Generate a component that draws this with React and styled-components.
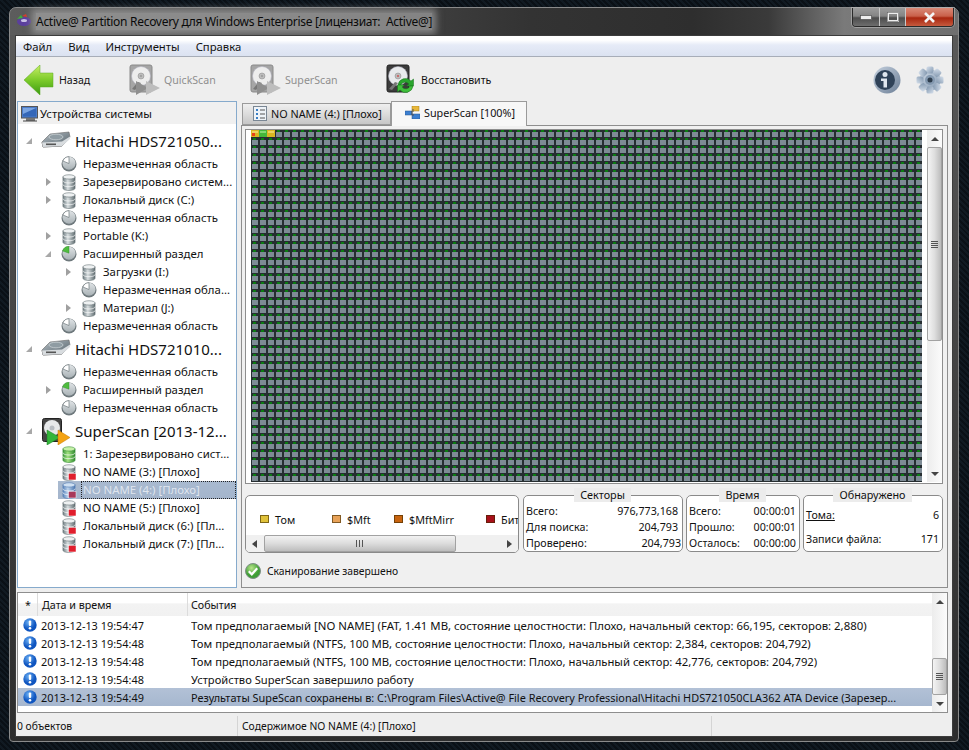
import React from "react";
import styled, { createGlobalStyle } from "styled-components";

const Global = createGlobalStyle`
  html, body { margin: 0; padding: 0; background: #0b1117; }
  body { width: 969px; height: 750px; overflow: hidden; font-family: "Noto Sans", "Open Sans", "Liberation Sans", sans-serif; font-size: 12px; color: #111; }
  * { box-sizing: border-box; }
`;

const Desktop = styled.div`
  width: 969px; height: 750px; padding: 7px 10px 8px 9px;
  background: repeating-linear-gradient(45deg, #0a1016 0 2px, #111a22 2px 4px);
`;
const Win = styled.div`
  height: 735px; display: flex; flex-direction: column;
  border: 1px solid #8a8a8a; border-radius: 7px 7px 4px 4px;
  background: linear-gradient(180deg, #5b5b5b 0, #474747 40%, #2d2d2d 100%);
  padding: 0 5px 4px 5px;
`;
const TitleBar = styled.div`
  height: 27px; flex: none; display: flex; align-items: flex-start; margin: 0 -5px; padding-left: 6px;
  border-radius: 7px 7px 0 0;
  background: linear-gradient(90deg, #5c5c5c 0, #4c4c4c 30%, #333 55%, #2e2e2e 72%, #3a3a3a 80%, #7a7a7a 88%, #6f6f6f 100%);
`;
const TitleIcon = styled.svg`width: 15px; height: 13px; margin-top: 6px; flex: none;`;
const TitleText = styled.span`
  margin: 5px 0 0 5px; font-size: 12px; letter-spacing: -.29px; line-height: 17px; color: #0a0a0a; white-space: pre;
  background: rgba(175,175,175,.62); box-shadow: 0 0 7px 4px rgba(175,175,175,.62);
`;
const WinButtons = styled.div`
  margin-left: auto; margin-right: 4px; display: flex; height: 19px; flex: none; border: 1px solid #2a2a2a;
  border-top: none; border-radius: 0 0 4px 4px; overflow: hidden; box-shadow: 0 0 0 1px rgba(255,255,255,.3);
`;
const WinBtn = styled.div`
  width: ${p => p.$w}px; display: flex; align-items: center; justify-content: center;
  border-right: ${p => p.$last ? "none" : "1px solid #c8c8c8"};
  background: ${p => p.$close
    ? "linear-gradient(180deg, #d98a78 0, #c9604a 45%, #a8260f 55%, #c65a3e 100%)"
    : "linear-gradient(180deg, #9b9b9b 0, #848484 45%, #4d4d4d 55%, #6e6e6e 100%)"};
`;
const Client = styled.div`
  flex: 1; min-height: 0; display: flex; flex-direction: column; background: #eeeeee; border: 1px solid #3c3c3c;
`;
const MenuBar = styled.div`
  height: 21px; flex: none; display: flex; align-items: center; padding: 1px 0 0 0;
  background: linear-gradient(180deg, #fff 0, #fff 20%, #e6ebf7 45%, #dbe2f1 100%); border-bottom: 1px solid #a7adb8;
`;
const MenuItem = styled.span`padding: 0 ${p => p.$pr}px 0 ${p => p.$pl}px; font-size: 11.3px; line-height: 20px; white-space: nowrap;`;
const Toolbar = styled.div`
  height: 44px; flex: none; display: flex; align-items: center; padding: 1px 8px 0 8px;
`;
const ToolBtn = styled.div`
  width: ${p => p.$w}px; display: flex; align-items: center; gap: ${p => p.$gap}px; flex: none;
  font-size: 10.6px; color: ${p => p.$off ? "#8f8f8f" : "#111"}; white-space: nowrap;
`;
const ToolRight = styled.div`margin-left: auto; display: flex; align-items: center; gap: 15px;`;
const Panes = styled.div`
  flex: none; height: 487px; display: flex; gap: 4px; padding: 0 4px 0 1px;
`;
const Side = styled.div`
  width: 220px; flex: none; display: flex; flex-direction: column; background: #fff; border: 1px solid #86aacc; overflow: hidden;
`;
const SideHead = styled.div`
  height: 22px; flex: none; display: flex; align-items: center; gap: 2px; padding: 1px 0 0 3px; background: #f0f0f0; font-size: 11.4px;
`;
const Tree = styled.div`padding-top: 3px; display: flex; flex-direction: column;`;
const DeviceRow = styled.div`
  height: 28px; display: flex; align-items: center; font-size: 15px; white-space: nowrap;
`;
const DeviceLabel = styled.span`margin-left: 3px;`;
const Exp = styled.span`
  width: ${p => p.$w}px; flex: none; display: flex; justify-content: center; align-items: center;
`;
const NodeRow = styled.div`
  height: 18px; display: flex; align-items: center; white-space: nowrap; font-size: 11.4px;
  padding-left: ${p => 22 + p.$lvl * 20}px;
`;
const NodeBody = styled.div`
  flex: 1; min-width: 0; height: 18px; margin-left: 2px; padding-left: 3px; display: flex; align-items: center;
  background: ${p => p.$sel ? "linear-gradient(180deg, #a9bad0, #a4b5cc)" : "transparent"};
  color: ${p => p.$sel ? "#dfe5ee" : "#111"};
`;
const NodeIcon = styled.span`width: 16px; height: 18px; flex: none; display: flex; align-items: center; justify-content: center;`;
const NodeText = styled.span`
  margin-left: 4px; flex: 1; min-width: 0; line-height: 16px; height: 18px; padding: 0 1px; display: block;
  border: ${p => p.$sel ? "1px dotted #222" : "1px solid transparent"};
`;
const Main = styled.div`flex: 1; min-width: 0; display: flex; flex-direction: column;`;
const Tabs = styled.div`height: 24px; flex: none; display: flex; align-items: flex-end; padding-left: 1px; position: relative; z-index: 1;`;
const Tab = styled.div`
  width: ${p => p.$w}px; height: ${p => p.$on ? 25 : 22}px; flex: none; display: flex; align-items: center; gap: 4px;
  padding: 0 0 ${p => p.$on ? 3 : 2}px ${p => p.$on ? 13 : 10}px; font-size: 10.8px; white-space: nowrap;
  border: 1px solid #9a9a9a; border-bottom: ${p => p.$on ? "none" : "1px solid #9a9a9a"};
  background: ${p => p.$on ? "#f7f7f7" : "linear-gradient(180deg, #efefef 0, #dcdcdc 50%, #c6c6c6 100%)"};
  margin-bottom: ${p => p.$on ? -1 : 0}px;
`;
const TabBody = styled.div`
  flex: 1; min-height: 0; border: 1px solid #8e8e8e; background: #f0f0f0; padding: 3px 4px 0 3px; display: flex; flex-direction: column;
`;
const MapFrame = styled.div`
  height: 355px; flex: none; display: flex; background: #fff; border: 1px solid #8e8e8e; padding: 0 0 1px 5px; gap: 5px;
`;
const MapSvg = styled.svg`width: 671px; height: 352px; flex: none; display: block;`;
const VBar = styled.div`
  width: ${p => p.$w}px; flex: none; display: flex; flex-direction: column; background: linear-gradient(90deg, #ececec, #fbfbfb);
`;
const VEnd = styled.div`height: 17px; flex: none; display: flex; align-items: center; justify-content: center;`;
const VThumb = styled.div`
  height: ${p => p.$h}px; flex: none; border: 1px solid #a2a2a2; border-radius: 2px;
  background: linear-gradient(90deg, #f4f4f4 0, #dedede 50%, #bcbcbc 100%); display: flex; align-items: center; justify-content: center;
`;
const VFill = styled.div`flex: 1;`;
const Grip = styled.div`width: 7px; height: 7px; background: repeating-linear-gradient(180deg, #555 0 1px, transparent 1px 2px);`;
const GripH = styled.div`width: 8px; height: 7px; background: repeating-linear-gradient(90deg, #555 0 1px, transparent 1px 3px);`;
const Stats = styled.div`height: 64px; margin-top: 4px; flex: none; display: flex; gap: 3px;`;
const LegendBox = styled.div`
  width: 274px; height: 58px; margin-top: 7px; flex: none; background: #fff; border: 1px solid #8a8a8a; border-radius: 5px;
  display: flex; flex-direction: column; overflow: hidden; margin-right: 1px;
`;
const LegendItems = styled.div`flex: 1; display: flex; align-items: center; padding: 7px 0 0 14px; white-space: nowrap; overflow: hidden;`;
const LegendItem = styled.div`width: ${p => p.$w}px; flex: none; display: flex; align-items: center; gap: 6px; font-size: 10.8px;`;
const Swatch = styled.span`
  width: 9px; height: 8px; flex: none; border: 1px solid rgba(60,40,0,.6); background: ${p => p.$c};
`;
const HBar = styled.div`height: 17px; flex: none; display: flex; align-items: stretch; background: #f0f0f0;`;
const HEnd = styled.div`width: 18px; flex: none; display: flex; align-items: center; justify-content: center;`;
const HThumb = styled.div`
  width: 192px; flex: none; border: 1px solid #a2a2a2; border-radius: 2px;
  background: linear-gradient(180deg, #f2f2f2 0, #dcdcdc 50%, #bdbdbd 100%); display: flex; align-items: center; justify-content: center;
`;
const StatBox = styled.fieldset`
  width: ${p => p.$w}px; height: 64px; flex: none; margin: 0; min-width: 0; padding: 1px 3px 0 2px;
  background: #fff; border: 1px solid #8a8a8a; border-radius: 5px; display: block;
  legend {
    margin: 0 auto; padding: 0 6px; font-size: 10.8px; line-height: 14px; background: #ececec; text-align: center; height: 14px;
  }
`;
const StatRow = styled.div`
  height: ${p => p.$h}px; display: flex; justify-content: space-between; align-items: center; font-size: 10.7px; white-space: nowrap;
  margin-right: ${p => p.$nudge || 0}px;
  u { text-decoration: underline; }
`;
const Status = styled.div`
  flex: 1; display: flex; align-items: center; gap: 6px; font-size: 10.3px; padding-top: 2px;
`;
const Log = styled.div`
  height: 121px; flex: none; margin: 4px 4px 0 1px; border: 1px solid #8e8e8e; background: #fff; display: flex;
`;
const LogMain = styled.div`flex: 1; min-width: 0; display: flex; flex-direction: column;`;
const LogHead = styled.div`
  height: 23px; flex: none; display: flex; align-items: center; font-size: 10.7px;
  background: linear-gradient(180deg, #fff 0, #fff 45%, #f3f3f3 46%, #f1f1f1 100%);
`;
const LogCol = styled.div`
  width: ${p => p.$w}px; flex: ${p => p.$w ? "none" : 1}; height: 100%; display: flex; align-items: center; padding-left: ${p => p.$pl}px;
  border-right: ${p => p.$w ? "1px solid #dcdcdc" : "none"};
`;
const LogRow = styled.div`
  height: 18px; flex: none; display: flex; align-items: center; white-space: nowrap;
  background: ${p => p.$sel ? "linear-gradient(180deg, #b2c1d6, #a6b7cf)" : "transparent"};
`;
const LogIconCell = styled.div`width: 23px; flex: none; display: flex; justify-content: center;`;
const LogDate = styled.div`width: 150px; flex: none; font-size: 10.9px;`;
const LogMsg = styled.div`flex: 1; min-width: 0; overflow: hidden; font-size: ${p => p.$fs}px;`;
const StatusBar = styled.div`flex: 1; display: flex; align-items: center; font-size: 10.35px; padding-top: 3px;`;
const StatusCell = styled.div`
  width: ${p => p.$w}px; flex: ${p => p.$w ? "none" : 1}; height: 100%; display: flex; align-items: center; padding-left: ${p => p.$pl}px;
  border-right: ${p => p.$w ? "1px solid #d4d4d4" : "none"};
`;

const Tri = ({ dir = "r", c = "#9a9a9a", s = 8 }) => {
  const pts = { r: "2,0 7,4 2,8", dr: "7,1 7,7 1,7", u: "4,2 8,6 0,6", d: "0,2 8,2 4,6", l: "6,0 6,8 1,4" }[dir];
  return <svg width={s} height={s} viewBox="0 0 8 8"><polygon points={pts} fill={c} /></svg>;
};

const Cyl = ({ kind = "gray" }) => {
  const g = kind === "green"
    ? ["#3f9a3f", "#9fe07f", "#2f8a2f", "#c6f0a8"]
    : kind === "sel"
    ? ["#5b85bd", "#bcd3ec", "#4c77b0", "#cfe0f2"]
    : ["#6f7d82", "#d8dee0", "#5f6c70", "#eef1f2"];
  const id = "cy" + kind;
  return (
    <svg width="14" height="17" viewBox="0 0 15 18" style={{ overflow: "visible" }}>
      <defs><linearGradient id={id}><stop offset="0" stopColor={g[0]} /><stop offset=".4" stopColor={g[1]} /><stop offset="1" stopColor={g[2]} /></linearGradient></defs>
      <path d="M1 3v12c0 1.6 2.8 2.6 6.5 2.6S14 16.600 14 15V3z" fill={`url(#${id})`} stroke={g[2]} strokeWidth=".6" />
      <ellipse cx="7.500" cy="3" rx="6.500" ry="2.300" fill={g[3]} stroke={g[2]} strokeWidth=".6" />
      <path d="M1 7c0 1.600 2.800 2.500 6.500 2.500S14 8.600 14 7M1 11c0 1.600 2.800 2.500 6.500 2.500S14 12.600 14 11" fill="none" stroke="#fff" strokeWidth=".9" opacity=".85" />
      {(kind === "bad" || kind === "sel") && <rect x="7" y="10" width="8" height="7" fill={kind === "sel" ? "#a8385a" : "#e01f2d"} stroke="#fff" strokeWidth=".5" />}
    </svg>
  );
};

const Pie = ({ ext }) => (
  <svg width="16" height="16" viewBox="0 0 16 16">
    <defs><linearGradient id="pieg" x1="0" y1="0" x2="0" y2="1"><stop offset="0" stopColor="#e0e4e6" /><stop offset="1" stopColor="#a9b2b6" /></linearGradient></defs>
    <circle cx="8" cy="8" r="7.500" fill="#6e787c" />
    <circle cx="8" cy="7.200" r="6.500" fill="url(#pieg)" />
    {ext
      ? <path d="M8 7.200L8 .2A7 7 0 0 0 1.500 5z" fill="#4fbc3f" stroke="#2f8a2a" strokeWidth=".4" />
      : <path d="M8 7.500L8 .7A6.500 6.500 0 0 0 1.900 5z" fill="#fff" stroke="#6e787c" strokeWidth=".7" />}
  </svg>
);

const Hdd = () => (
  <svg width="30" height="20" viewBox="0 0 30 20">
    <defs><linearGradient id="hddg" x1="0" y1="0" x2="1" y2="1"><stop offset="0" stopColor="#b4bec4" /><stop offset="1" stopColor="#55626a" /></linearGradient></defs>
    <path d="M1 11L9 3 28 1l1 5-8 9-19 1z" fill="url(#hddg)" stroke="#666" strokeWidth=".6" />
    <path d="M1 11l1 5 19-1 8-9" fill="none" stroke="#888" strokeWidth=".8" />
    <path d="M1 11.500l20-1 8-5V8l-8 7-19 1z" fill="#d8dcdf" />
    <ellipse cx="15" cy="6" rx="7" ry="2.800" fill="#8f9ca3" stroke="#cfd5d8" strokeWidth=".7" />
    <rect x="5" y="12.500" width="10" height="1.600" fill="#555" />
  </svg>
);

const DiskBody = ({ dim }) => (
  <g>
    <rect x="1" y="1" width="22" height="27" rx="2" fill={dim ? "#a5a5a5" : "#3b3b3b"} stroke={dim ? "#8a8a8a" : "#222"} />
    <circle cx="12" cy="12" r="9.500" fill={dim ? "#ededed" : "#e8eaec"} stroke="#aab" strokeWidth=".5" />
    <circle cx="12" cy="12" r="3" fill="#bcbcbc" stroke="#888" strokeWidth=".5" />
    <circle cx="12" cy="12" r="1" fill={dim ? "#999" : "#c55"} />
    <path d="M3 25l6-7 3 1-6 7z" fill="#777" />
  </g>
);

const ScanIcon = () => (
  <svg width="32" height="31" viewBox="0 0 32 31">
    <DiskBody dim />
    <polygon points="7,17 19,24 7,31" fill="#8f8f8f" />
    <polygon points="17,17 31,24 17,31" fill="#bdbdbd" />
  </svg>
);

const RestoreIcon = () => (
  <svg width="31" height="31" viewBox="0 0 31 31">
    <DiskBody />
    <path d="M12 21a7.500 7.500 0 0 1 13-4l2.500-2v7h-7l2.300-2a4.500 4.500 0 0 0-7.800 1z" fill="#2aa52e" stroke="#14711a" strokeWidth=".5" />
    <path d="M27 22a7.500 7.500 0 0 1-13 4l-2.500 2v-7h7l-2.300 2a4.500 4.500 0 0 0 7.800-1z" fill="#3fbf3a" stroke="#14711a" strokeWidth=".5" />
  </svg>
);

const BackArrow = () => (
  <svg width="30" height="30" viewBox="0 0 30 30">
    <defs><linearGradient id="bk" x1="0" y1="0" x2="0" y2="1"><stop offset="0" stopColor="#c8ee66" /><stop offset=".5" stopColor="#7ccb2a" /><stop offset="1" stopColor="#3b9a12" /></linearGradient></defs>
    <path d="M0 15L16 0v8h13v14H16v8z" fill="url(#bk)" stroke="#5aa820" strokeWidth=".5" />
  </svg>
);

const InfoIcon = () => (
  <svg width="28" height="28" viewBox="0 0 28 28">
    <defs><linearGradient id="inf" x1="0" y1="0" x2="1" y2="1"><stop offset="0" stopColor="#c4d0de" /><stop offset="1" stopColor="#6c7f96" /></linearGradient></defs>
    <circle cx="14" cy="14" r="13.500" fill="url(#inf)" />
    <circle cx="12" cy="14" r="10" fill="#2f4258" />
    <circle cx="12" cy="8.500" r="2.500" fill="#dfe6ee" />
    <path d="M8 12.500h6v9h-3.500v-6.500H8z" fill="#dfe6ee" />
  </svg>
);

const GearIcon = () => (
  <svg width="28" height="28" viewBox="0 0 28 28">
    <defs><linearGradient id="gr" x1="0" y1="0" x2="1" y2="1"><stop offset="0" stopColor="#d6e0ec" /><stop offset="1" stopColor="#7f95ad" /></linearGradient></defs>
    <g fill="url(#gr)">
      <circle cx="14" cy="14" r="10.500" />
      {[0, 45, 90, 135, 180, 225, 270, 315].map(a => <rect key={a} x="10.500" y="0.500" width="7" height="7" rx="1.500" transform={`rotate(${a} 14 14)`} />)}
    </g>
    <circle cx="14" cy="14" r="5" fill="#8499b0" />
    <circle cx="14" cy="14" r="2.500" fill="#2e3d4d" />
  </svg>
);

const Monitor = () => (
  <svg width="17" height="16" viewBox="0 0 17 16">
    <rect x=".5" y=".5" width="16" height="11.500" fill="#4b7cc9" stroke="#555" />
    <rect x="2" y="2" width="13" height="8.500" fill="#3467b8" />
    <path d="M2 2h13L2 8z" fill="#7aa5e2" />
    <rect x="5" y="12" width="9" height="3" fill="#777" />
    <path d="M2 15h14" stroke="#444" />
  </svg>
);

const TabList = () => (
  <svg width="14" height="15" viewBox="0 0 14 15">
    <rect x=".5" y=".5" width="13" height="14" fill="#eef3f8" stroke="#7a8794" />
    <path d="M3 3h2v2H3zM3 7h2v2H3zM3 11h2v2H3z" fill="#3b7fc4" />
    <path d="M7 4h5M7 8h5M7 12h5" stroke="#555" />
  </svg>
);
const TabMap = () => (
  <svg width="15" height="13" viewBox="0 0 15 13">
    <rect x="0" y="5" width="7" height="4" fill="#3c7fd0" stroke="#26568f" strokeWidth=".5" />
    <rect x="7" y="0" width="7" height="5" fill="#e8b73a" stroke="#a07c1d" strokeWidth=".5" />
    <rect x="7" y="8" width="8" height="5" fill="#3c7fd0" stroke="#26568f" strokeWidth=".5" />
    <path d="M6 6h2V3M6 8h2v2" fill="none" stroke="#555" />
  </svg>
);
const LogInfo = () => (
  <svg width="14" height="14" viewBox="0 0 14 14">
    <defs><radialGradient id="li" cx=".4" cy=".3"><stop offset="0" stopColor="#6cb1f5" /><stop offset="1" stopColor="#0f55c0" /></radialGradient></defs>
    <circle cx="7" cy="7" r="6.700" fill="url(#li)" />
    <rect x="5.800" y="2.600" width="2.400" height="5.400" rx="1" fill="#fff" />
    <circle cx="7" cy="10.200" r="1.300" fill="#fff" />
  </svg>
);
const Check = () => (
  <svg width="16" height="16" viewBox="0 0 16 16">
    <defs><radialGradient id="ck" cx=".4" cy=".3"><stop offset="0" stopColor="#b8e58a" /><stop offset="1" stopColor="#3f9e36" /></radialGradient></defs>
    <circle cx="8" cy="8" r="7.500" fill="url(#ck)" stroke="#7f8f86" />
    <path d="M3.800 8.300l3 3 5.400-6" fill="none" stroke="#fff" strokeWidth="2.200" />
  </svg>
);
const ScanDevice = () => (
  <svg width="29" height="27" viewBox="0 0 29 27">
    <rect x=".5" y=".5" width="19" height="23" rx="2" fill="#444" stroke="#222" />
    <circle cx="10" cy="10" r="8" fill="#e6e8ea" />
    <circle cx="10" cy="10" r="2.500" fill="#b7bcc2" />
    <polygon points="5,12 18,19.500 5,27" fill="#33b53a" stroke="#1e7f24" strokeWidth=".5" />
    <polygon points="16,12 28,19.500 16,27" fill="#f4a313" stroke="#c47b00" strokeWidth=".5" />
  </svg>
);

const Cell = ({ x, a, b, red }) => (
  <g>
    <rect x={x} y="0" width="8" height="7" fill={a} />
    <rect x={x + 1} y="1" width="6" height="2" fill={b} opacity=".7" />
    {red && <rect x={x + 1} y="3" width="3" height="3" fill="#e8401a" />}
  </g>
);

const Map = () => (
  <MapSvg viewBox="0 0 671 352">
    <defs>
      <pattern id="cell" width="8" height="8" patternUnits="userSpaceOnUse">
        <rect width="8" height="8" fill="#262e31" />
        <rect x="1" y="2" width="6" height="5" fill="#7e8b95" />
        <rect x="2" y="0" width="3" height="2" fill="#0a7d12" />
      </pattern>
    </defs>
    <rect width="671" height="352" fill="url(#cell)" />
    <Cell x={0} a="#d9b722" b="#f5e07a" red />
    <Cell x={8} a="#45b83b" b="#9fe88a" />
    <Cell x={16} a="#d9b722" b="#f5e07a" />
  </MapSvg>
);

const treeData = [
  { dev: "Hitachi HDS721050...", icon: <Hdd />, children: [
    { t: "Неразмеченная область", i: "pie" },
    { t: "Зарезервировано систем...", i: "cyl", e: "r" },
    { t: "Локальный диск (C:)", i: "cyl", e: "r" },
    { t: "Неразмеченная область", i: "pie" },
    { t: "Portable (K:)", i: "cyl", e: "r" },
    { t: "Расширенный раздел", i: "ext", e: "dr" },
    { t: "Загрузки (I:)", i: "cyl", e: "r", l: 1 },
    { t: "Неразмеченная обла...", i: "pie", l: 1 },
    { t: "Материал (J:)", i: "cyl", e: "r", l: 1 },
    { t: "Неразмеченная область", i: "pie" },
  ] },
  { dev: "Hitachi HDS721010...", icon: <Hdd />, children: [
    { t: "Неразмеченная область", i: "pie" },
    { t: "Расширенный раздел", i: "ext", e: "r" },
    { t: "Неразмеченная область", i: "pie" },
  ] },
  { dev: "SuperScan [2013-12...", icon: <ScanDevice />, children: [
    { t: "1: Зарезервировано сист...", i: "green" },
    { t: "NO NAME (3:) [Плохо]", i: "bad" },
    { t: "NO NAME (4:) [Плохо]", i: "sel", sel: true },
    { t: "NO NAME (5:) [Плохо]", i: "bad" },
    { t: "Локальный диск (6:) [Пл...", i: "bad" },
    { t: "Локальный диск (7:) [Пл...", i: "bad" },
  ] },
];

const nodeIcon = i => {
  if (i === "pie") return <Pie />;
  if (i === "ext") return <Pie ext />;
  if (i === "cyl") return <Cyl />;
  return <Cyl kind={i} />;
};

const logs = [
  ["2013-12-13 19:54:47", "Том предполагаемый [NO NAME] (FAT, 1.41 MB, состояние целостности: Плохо, начальный сектор: 66,195, секторов: 2,880)", 11.4],
  ["2013-12-13 19:54:48", "Том предполагаемый (NTFS, 100 MB, состояние целостности: Плохо, начальный сектор: 2,384, секторов: 204,792)", 11.3],
  ["2013-12-13 19:54:48", "Том предполагаемый (NTFS, 100 MB, состояние целостности: Плохо, начальный сектор: 42,776, секторов: 204,792)", 11.3],
  ["2013-12-13 19:54:48", "Устройство SuperScan завершило работу", 11.15],
  ["2013-12-13 19:54:49", "Результаты SupeScan сохранены в: C:\\Program Files\\Active@ File Recovery Professional\\Hitachi HDS721050CLA362 ATA Device (Зарезер...", 10.9],
];

export default function App() {
  return (
    <Desktop>
      <Global />
      <Win>
        <TitleBar>
          <TitleIcon viewBox="0 0 15 13">
            <ellipse cx="8" cy="7.500" rx="7" ry="4.500" fill="#5b3f9e" />
            <ellipse cx="8" cy="6.500" rx="3" ry="1.500" fill="#c9c2e6" />
            <path d="M1 5l4-4 2 3z" fill="#3fae3a" />
            <path d="M6 2l4-2 1 3z" fill="#d83a2a" />
          </TitleIcon>
          <TitleText>Active@ Partition Recovery для Windows Enterprise [лицензиат:  Active@]</TitleText>
          <WinButtons>
            <WinBtn $w={27}><svg width="12" height="5" viewBox="0 0 12 5"><rect x=".5" y=".5" width="11" height="4" fill="#eee" stroke="#444" strokeWidth=".6" /></svg></WinBtn>
            <WinBtn $w={26}><svg width="12" height="10" viewBox="0 0 12 10"><rect x="1" y="1" width="10" height="8" fill="none" stroke="#eee" strokeWidth="2" /><rect x=".3" y=".3" width="11.400" height="9.400" fill="none" stroke="#444" strokeWidth=".5" /></svg></WinBtn>
            <WinBtn $w={47} $close $last><svg width="13" height="11" viewBox="0 0 13 11"><path d="M2 1l9 9M11 1l-9 9" stroke="#f4f4f4" strokeWidth="2.600" /></svg></WinBtn>
          </WinButtons>
        </TitleBar>
        <Client>
          <MenuBar>
            <MenuItem $pl={7} $pr={8}>Файл</MenuItem>
            <MenuItem $pl={8} $pr={8}>Вид</MenuItem>
            <MenuItem $pl={8} $pr={8}>Инструменты</MenuItem>
            <MenuItem $pl={8} $pr={8}>Справка</MenuItem>
          </MenuBar>
          <Toolbar>
            <ToolBtn $w={105} $gap={5}><BackArrow />Назад</ToolBtn>
            <ToolBtn $w={121} $gap={3} $off><ScanIcon />QuickScan</ToolBtn>
            <ToolBtn $w={136} $gap={3} $off><ScanIcon />SuperScan</ToolBtn>
            <ToolBtn $w={120} $gap={4}><RestoreIcon />Восстановить</ToolBtn>
            <ToolRight><InfoIcon /><GearIcon /></ToolRight>
          </Toolbar>
          <Panes>
            <Side>
              <SideHead><Monitor />Устройства системы</SideHead>
              <Tree>
                {treeData.map(d => (
                  <React.Fragment key={d.dev}>
                    <DeviceRow>
                      <Exp $w={22}><Tri dir="dr" c="#a8a8a8" /></Exp>
                      <Exp $w={32}>{d.icon}</Exp>
                      <DeviceLabel>{d.dev}</DeviceLabel>
                    </DeviceRow>
                    {d.children.map((c, i) => (
                      <NodeRow key={i} $lvl={c.l || 0}>
                        <Exp $w={16}>{c.e && <Tri dir={c.e} c={c.e === "r" ? "#a0a0a0" : "#a8a8a8"} />}</Exp>
                        <NodeBody $sel={c.sel}>
                          <NodeIcon>{nodeIcon(c.i)}</NodeIcon>
                          <NodeText $sel={c.sel}>{c.t}</NodeText>
                        </NodeBody>
                      </NodeRow>
                    ))}
                  </React.Fragment>
                ))}
              </Tree>
            </Side>
            <Main>
              <Tabs>
                <Tab $w={149}><TabList />NO NAME (4:) [Плохо]</Tab>
                <Tab $w={136} $on><TabMap />SuperScan [100%]</Tab>
              </Tabs>
              <TabBody>
                <MapFrame>
                  <Map />
                  <VBar $w={15}>
                    <VEnd><Tri dir="u" c="#444" /></VEnd>
                    <VThumb $h={194}><Grip /></VThumb>
                    <VFill />
                    <VEnd><Tri dir="d" c="#444" /></VEnd>
                  </VBar>
                </MapFrame>
                <Stats>
                  <LegendBox>
                    <LegendItems>
                      <LegendItem $w={72}><Swatch $c="#e0c23a" />Том</LegendItem>
                      <LegendItem $w={62}><Swatch $c="#e8a258" />$Mft</LegendItem>
                      <LegendItem $w={92}><Swatch $c="#c8640f" />$MftMirr</LegendItem>
                      <LegendItem $w={33}><Swatch $c="#a8101a" />Бит</LegendItem>
                    </LegendItems>
                    <HBar>
                      <HEnd><Tri dir="l" c="#444" /></HEnd>
                      <HThumb><GripH /></HThumb>
                      <VFill />
                      <HEnd><Tri dir="r" c="#444" /></HEnd>
                    </HBar>
                  </LegendBox>
                  <StatBox $w={160}>
                    <legend>Секторы</legend>
                    <StatRow $h={16} $nudge={1}><span>Всего:</span><span>976,773,168</span></StatRow>
                    <StatRow $h={16} $nudge={1}><span>Для поиска:</span><span>204,793</span></StatRow>
                    <StatRow $h={16} $nudge={-2}><span>Проверено:</span><span>204,793</span></StatRow>
                  </StatBox>
                  <StatBox $w={114}>
                    <legend>Время</legend>
                    <StatRow $h={16}><span>Всего:</span><span>00:00:01</span></StatRow>
                    <StatRow $h={16}><span>Прошло:</span><span>00:00:01</span></StatRow>
                    <StatRow $h={16}><span>Осталось:</span><span>00:00:00</span></StatRow>
                  </StatBox>
                  <StatBox $w={140}>
                    <legend>Обнаружено</legend>
                    <StatRow $h={24}><u>Тома:</u><span>6</span></StatRow>
                    <StatRow $h={24}><span>Записи файла:</span><span>171</span></StatRow>
                  </StatBox>
                </Stats>
                <Status><Check />Сканирование завершено</Status>
              </TabBody>
            </Main>
          </Panes>
          <Log>
            <LogMain>
              <LogHead>
                <LogCol $w={20} $pl={7}>*</LogCol>
                <LogCol $w={150} $pl={4}>Дата и время</LogCol>
                <LogCol $pl={3}>События</LogCol>
              </LogHead>
              {logs.map((l, i) => (
                <LogRow key={i} $sel={i === 4}>
                  <LogIconCell><LogInfo /></LogIconCell>
                  <LogDate>{l[0]}</LogDate>
                  <LogMsg $fs={l[2]}>{l[1]}</LogMsg>
                </LogRow>
              ))}
            </LogMain>
            <VBar $w={15}>
              <VEnd><Tri dir="u" c="#444" /></VEnd>
              <VFill />
              <VThumb $h={37}><Grip /></VThumb>
              <VEnd><Tri dir="d" c="#444" /></VEnd>
            </VBar>
          </Log>
          <StatusBar>
            <StatusCell $w={222} $pl={1}>0 объектов</StatusCell>
            <StatusCell $w={474} $pl={4}>Содержимое NO NAME (4:) [Плохо]</StatusCell>
            <StatusCell />
          </StatusBar>
        </Client>
      </Win>
    </Desktop>
  );
}
